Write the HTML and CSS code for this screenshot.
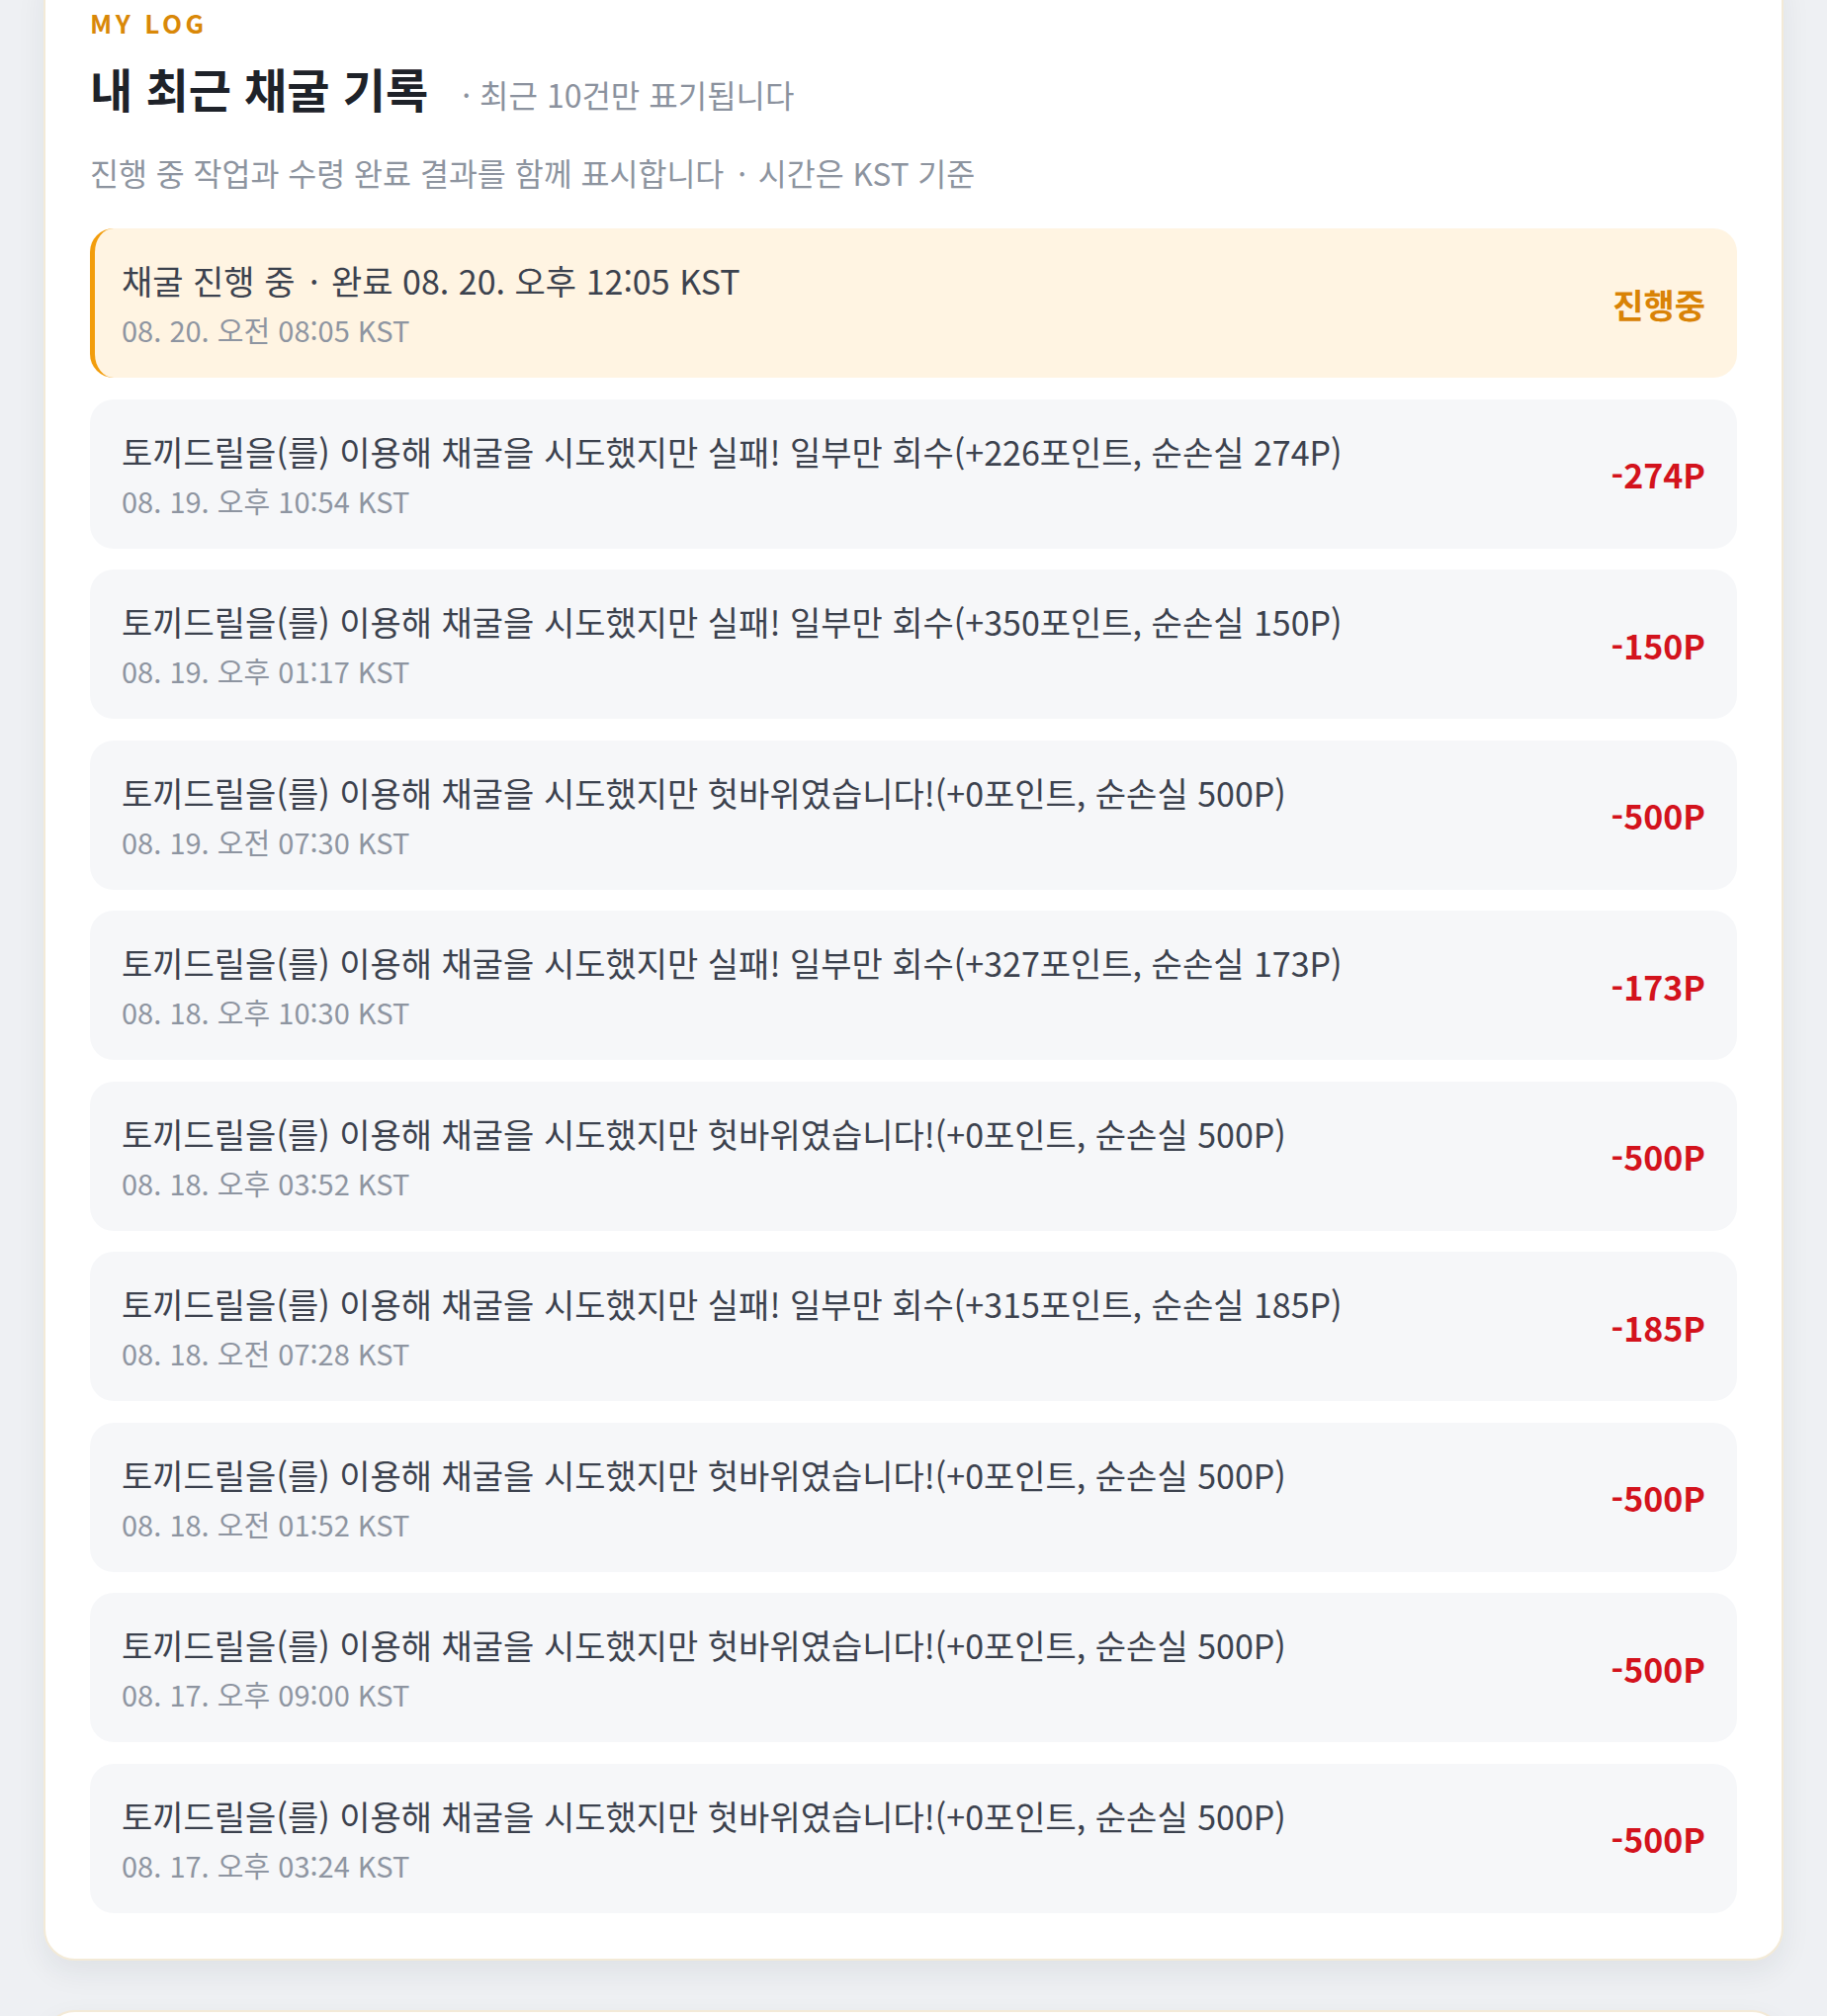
FILE: index.html
```html
<!DOCTYPE html>
<html lang="ko">
<head>
<meta charset="utf-8">
<title>내 최근 채굴 기록</title>
<link rel="stylesheet" href="styles.css">
</head>
<body>
<main class="page">
  <section class="card log-card">
    <div class="eyebrow">MY LOG</div>
    <div class="title-row">
      <h2 class="title">내 최근 채굴 기록</h2>
      <span class="title-note">· 최근 10건만 표기됩니다</span>
    </div>
    <p class="desc">진행 중 작업과 수령 완료 결과를 함께 표시합니다 <span class="sep">·</span> 시간은 KST 기준</p>
    <ul class="log-list">
      <li class="log-row active">
        <div class="log-text">
          <div class="log-main">채굴 진행 중 <span class="sep">·</span> 완료 08. 20. 오후 12:05 KST</div>
          <div class="log-date">08. 20. 오전 08:05 KST</div>
        </div>
        <div class="log-status">진행중</div>
      </li>
      <li class="log-row">
        <div class="log-text">
          <div class="log-main">토끼드릴을(를) 이용해 채굴을 시도했지만 실패! 일부만 회수(+226포인트, 순손실 274P)</div>
          <div class="log-date">08. 19. 오후 10:54 KST</div>
        </div>
        <div class="log-amount">-274P</div>
      </li>
      <li class="log-row">
        <div class="log-text">
          <div class="log-main">토끼드릴을(를) 이용해 채굴을 시도했지만 실패! 일부만 회수(+350포인트, 순손실 150P)</div>
          <div class="log-date">08. 19. 오후 01:17 KST</div>
        </div>
        <div class="log-amount">-150P</div>
      </li>
      <li class="log-row">
        <div class="log-text">
          <div class="log-main">토끼드릴을(를) 이용해 채굴을 시도했지만 헛바위였습니다!(+0포인트, 순손실 500P)</div>
          <div class="log-date">08. 19. 오전 07:30 KST</div>
        </div>
        <div class="log-amount">-500P</div>
      </li>
      <li class="log-row">
        <div class="log-text">
          <div class="log-main">토끼드릴을(를) 이용해 채굴을 시도했지만 실패! 일부만 회수(+327포인트, 순손실 173P)</div>
          <div class="log-date">08. 18. 오후 10:30 KST</div>
        </div>
        <div class="log-amount">-173P</div>
      </li>
      <li class="log-row">
        <div class="log-text">
          <div class="log-main">토끼드릴을(를) 이용해 채굴을 시도했지만 헛바위였습니다!(+0포인트, 순손실 500P)</div>
          <div class="log-date">08. 18. 오후 03:52 KST</div>
        </div>
        <div class="log-amount">-500P</div>
      </li>
      <li class="log-row">
        <div class="log-text">
          <div class="log-main">토끼드릴을(를) 이용해 채굴을 시도했지만 실패! 일부만 회수(+315포인트, 순손실 185P)</div>
          <div class="log-date">08. 18. 오전 07:28 KST</div>
        </div>
        <div class="log-amount">-185P</div>
      </li>
      <li class="log-row">
        <div class="log-text">
          <div class="log-main">토끼드릴을(를) 이용해 채굴을 시도했지만 헛바위였습니다!(+0포인트, 순손실 500P)</div>
          <div class="log-date">08. 18. 오전 01:52 KST</div>
        </div>
        <div class="log-amount">-500P</div>
      </li>
      <li class="log-row">
        <div class="log-text">
          <div class="log-main">토끼드릴을(를) 이용해 채굴을 시도했지만 헛바위였습니다!(+0포인트, 순손실 500P)</div>
          <div class="log-date">08. 17. 오후 09:00 KST</div>
        </div>
        <div class="log-amount">-500P</div>
      </li>
      <li class="log-row">
        <div class="log-text">
          <div class="log-main">토끼드릴을(를) 이용해 채굴을 시도했지만 헛바위였습니다!(+0포인트, 순손실 500P)</div>
          <div class="log-date">08. 17. 오후 03:24 KST</div>
        </div>
        <div class="log-amount">-500P</div>
      </li>
    </ul>
  </section>
  <section class="card next-card"></section>
</main>
</body>
</html>
```
FILE: styles.css
```css
* { box-sizing: border-box; }

html, body {
  margin: 0;
  padding: 0;
}

body {
  background: #eef0f3;
  font-family: "Noto Sans CJK KR", "Noto Sans", sans-serif;
  color: #1f232b;
  overflow: hidden;
}

.page {
  padding: 0 44px;
}

.card {
  background: #ffffff;
  border: 2px solid #f3ead7;
  border-radius: 32px;
  box-shadow: 0 12px 30px rgba(30, 40, 60, 0.07);
}

.log-card {
  margin-top: -40px;
  padding: 42px 45px 46px;
}

.next-card {
  margin-top: 50px;
  height: 200px;
}

.eyebrow {
  font-size: 26px;
  line-height: 38px;
  font-weight: 700;
  letter-spacing: 3.6px;
  color: #d98808;
}

.title-row {
  margin-top: 15px;
  display: flex;
  align-items: baseline;
  gap: 34px;
}

.title {
  margin: 0;
  font-size: 47px;
  line-height: 64px;
  font-weight: 700;
  color: #1e2229;
}

.title-note {
  font-size: 32px;
  color: #8b929e;
}

.desc {
  margin: 31px 0 0;
  font-size: 31.5px;
  line-height: 44px;
  color: #8d949f;
}

.sep {
  margin: 0 3px 0 5px;
}

.log-list {
  list-style: none;
  margin: 35px 0 0;
  padding: 0;
  display: flex;
  flex-direction: column;
  gap: 21.5px;
}

.log-row {
  display: flex;
  align-items: center;
  gap: 24px;
  background: #f6f7f9;
  border-radius: 24px;
  padding: 30px 32px 29px 32px;
}

.log-row.active {
  background: #fff4e2;
  border-left: 5px solid #f29d0c;
  padding-left: 27px;
}

.log-text {
  flex: 1;
  min-width: 0;
}

.log-main {
  font-size: 34px;
  line-height: 46px;
  color: #3c424e;
}

.log-date {
  margin-top: 6px;
  font-size: 29px;
  line-height: 40px;
  color: #8e95a1;
}

.log-amount,
.log-status {
  font-size: 34px;
  font-weight: 700;
  white-space: nowrap;
}

.log-amount {
  color: #d3131d;
}

.log-status {
  color: #d98306;
}
```
